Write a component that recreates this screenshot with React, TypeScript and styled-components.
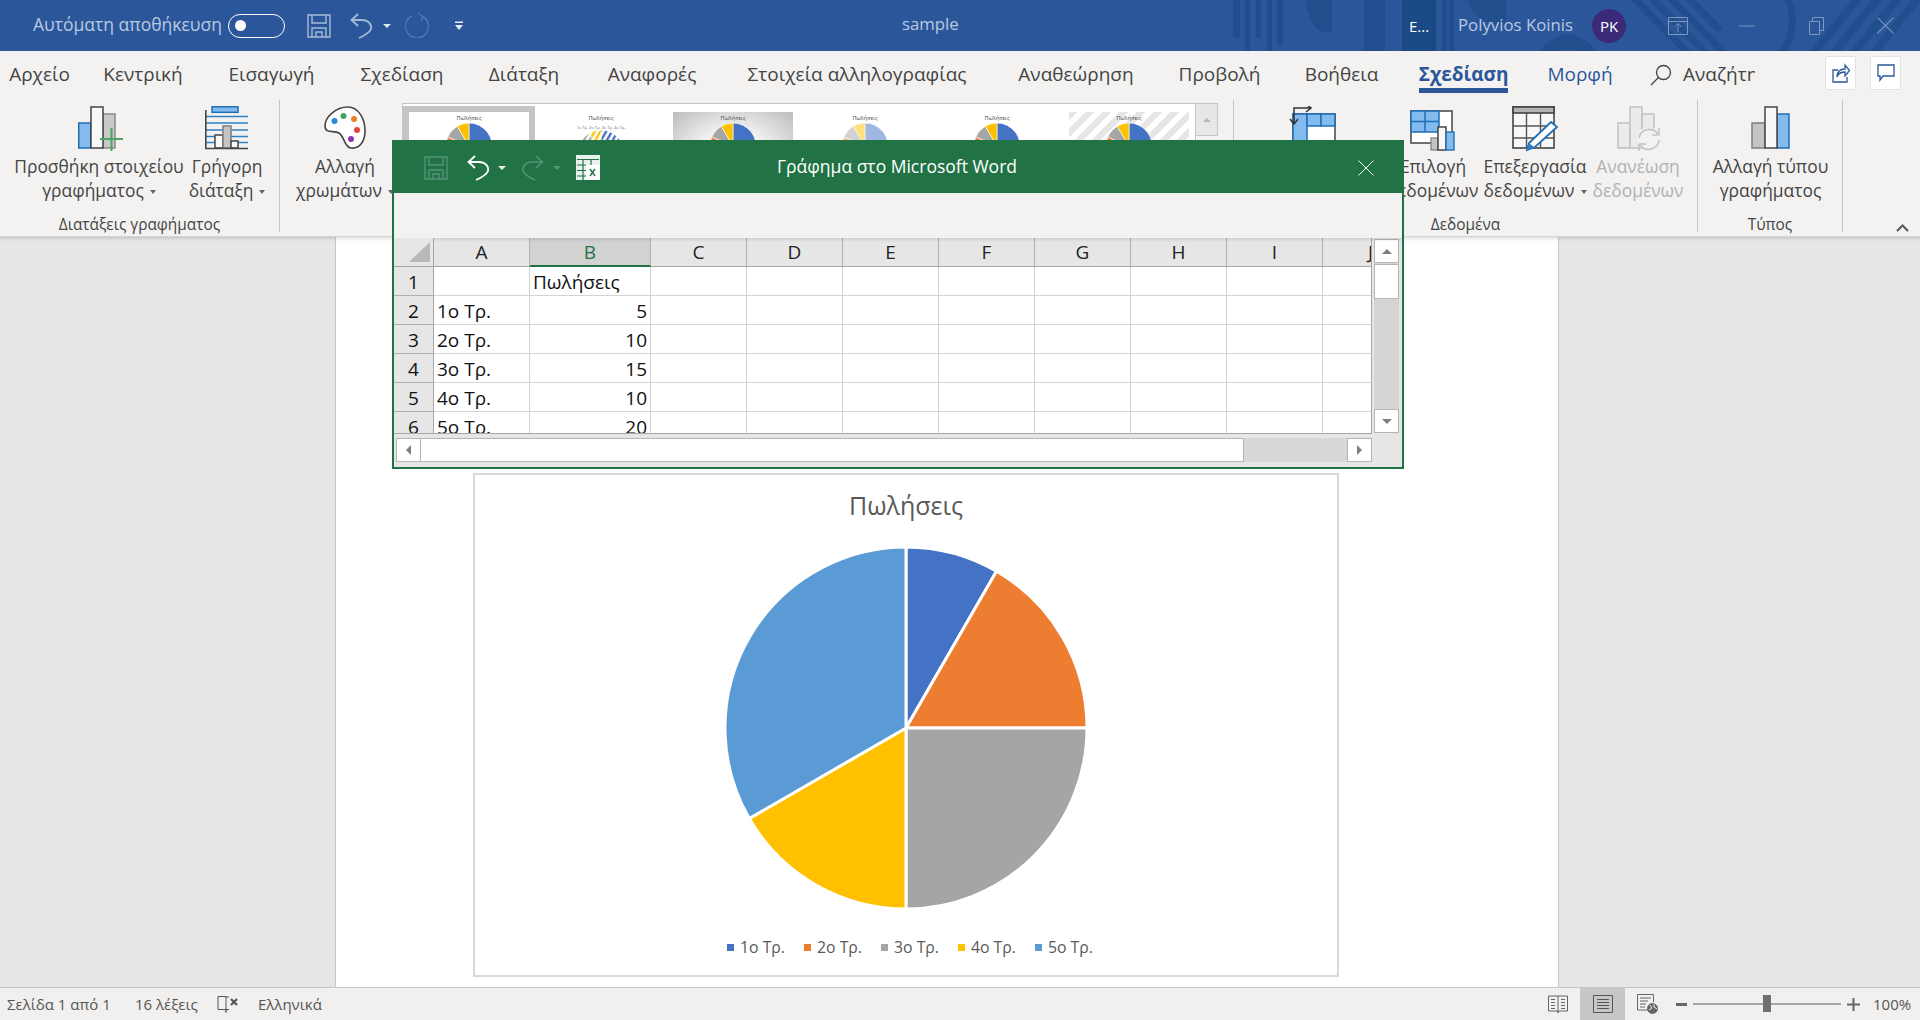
import styled, { createGlobalStyle } from 'styled-components';
import { FC, ReactNode } from 'react';

const FONT = `"Open Sans", "Noto Sans", sans-serif`;
const TEXT = '#444444';
const WORD_BLUE = '#2b579a';
const EXCEL_GREEN = '#217346';
const PIE_COLORS = ['#4472c4', '#ed7d31', '#a5a5a5', '#ffc000', '#5b9bd5'];
const PIE_VALUES = [5, 10, 15, 10, 20];
const THUMB_COLORS = ['#4472c4', '#ed7d31', '#a5a5a5', '#ffc000'];
const THUMB_VALUES = [8.2, 3.2, 1.4, 1.2];
const LABELS = ['1ο Τρ.', '2ο Τρ.', '3ο Τρ.', '4ο Τρ.', '5ο Τρ.'];

const GlobalStyle = createGlobalStyle`
  html, body {
    margin: 0;
    height: 100%;
    overflow: hidden;
    background: #e6e6e6;
    font-family: ${FONT};
  }
  * { box-sizing: border-box; }
`;

const Shell = styled.div`
  position: relative;
  width: 1920px;
  height: 1020px;
  display: flex;
  flex-direction: column;
  overflow: hidden;
`;

/* title bar */
const TitleBar = styled.header`
  position: relative;
  height: 51px;
  flex: none;
  display: flex;
  align-items: center;
  background: ${WORD_BLUE};
  color: #b9c9e0;
  font-size: 16.8px;
`;

const TitlePattern = styled.svg`
  position: absolute;
  right: 0;
  top: 0;
`;

const TitleLeft = styled.div`
  position: relative;
  width: 902px;
  flex: none;
  display: flex;
  align-items: center;
  padding-left: 33px;
`;

const AutoSaveLabel = styled.span`
  width: 190px;
  font-size: 17.5px;
  line-height: 24px;
  margin-top: -3px;
  white-space: nowrap;
`;

const Toggle = styled.span`
  width: 57px;
  height: 24px;
  margin-left: 5px;
  border: 1.5px solid #fff;
  border-radius: 12px;
  display: flex;
  align-items: center;
  padding-left: 6px;

  &::before {
    content: '';
    width: 11px;
    height: 11px;
    border-radius: 50%;
    background: #fff;
  }
`;

const Slot = styled.span<{ $ml: number }>`
  display: flex;
  align-items: center;
  margin-left: ${({ $ml }) => $ml}px;
`;

const Caret = styled.span<{ $color: string }>`
  width: 0;
  height: 0;
  border-left: 4px solid transparent;
  border-right: 4px solid transparent;
  border-top: 4px solid ${({ $color }) => $color};
`;

const DocName = styled.span`
  position: relative;
  width: 57px;
  line-height: 24px;
  margin-top: -3px;
  white-space: nowrap;
`;

const TitleRight = styled.div`
  position: relative;
  margin-left: auto;
  display: flex;
  align-items: center;
  height: 100%;
`;

const DocTab = styled.span`
  width: 34px;
  height: 100%;
  background: #1a4a86;
  color: #fff;
  font-size: 15px;
  display: flex;
  align-items: center;
  justify-content: center;
`;

const UserName = styled.span`
  margin-left: 22px;
  width: 134px;
  line-height: 24px;
  margin-top: -1px;
  white-space: nowrap;
`;

const Avatar = styled.span`
  width: 34px;
  height: 34px;
  border-radius: 50%;
  background: #3c2a79;
  color: #fff;
  font-size: 15px;
  display: flex;
  align-items: center;
  justify-content: center;
`;

const WindowControls = styled.div`
  margin-left: 17px;
  display: flex;
`;

const WindowButton = styled.span`
  width: 69.25px;
  display: flex;
  justify-content: center;
  align-items: center;
`;

/* tabs */
const TabRow = styled.nav`
  height: 49px;
  flex: none;
  display: flex;
  background: #f3f2f1;
  font-size: 19px;
  color: ${TEXT};
`;

const Tab = styled.div<{ $w: number; $accent?: boolean; $active?: boolean }>`
  width: ${({ $w }) => $w}px;
  flex: none;
  display: flex;
  justify-content: center;
  white-space: nowrap;
  color: ${({ $accent }) => ($accent ? WORD_BLUE : 'inherit')};
  font-weight: ${({ $active }) => ($active ? 700 : 400)};
`;

const TabLabel = styled.span<{ $active?: boolean }>`
  height: 42px;
  padding-top: 10px;
  line-height: 26px;
  border-bottom: 5px solid ${({ $active }) => ($active ? WORD_BLUE : 'transparent')};
`;

const SearchBox = styled.div`
  display: flex;
  align-items: flex-start;
  padding: 13px 0 0 11px;
`;

const SearchText = styled.span`
  width: 72px;
  margin-left: 11px;
  overflow: hidden;
  white-space: nowrap;
  line-height: 26px;
  margin-top: -3px;
`;

const TabActions = styled.div`
  margin-left: auto;
  padding: 5px 19px 0 0;
  display: flex;
  gap: 14px;
`;

const ActionButton = styled.span`
  width: 31px;
  height: 34px;
  background: #fff;
  border: 1px solid #e4e3e2;
  border-radius: 2px;
  display: flex;
  align-items: center;
  justify-content: center;
`;

/* ribbon */
const Ribbon = styled.section`
  height: 137px;
  flex: none;
  display: flex;
  background: #f3f2f1;
  border-bottom: 1px solid #d4d3d2;
  box-shadow: 0 2px 3px rgba(0, 0, 0, 0.12);
  position: relative;
  z-index: 1;
`;

const Group = styled.div<{ $w: number }>`
  width: ${({ $w }) => $w}px;
  height: 132px;
  flex: none;
  display: flex;
  flex-direction: column;
  border-right: 1px solid #c8c6c4;
`;

const GroupBody = styled.div`
  height: 116px;
  display: flex;
  align-items: flex-start;
`;

const GroupLabel = styled.div`
  height: 16px;
  line-height: 20px;
  margin-top: -1px;
  text-align: center;
  font-size: 15.4px;
  color: ${TEXT};
  white-space: nowrap;
`;

const RibbonButton = styled.div<{ $w: number; $ml?: number; $off?: boolean }>`
  width: ${({ $w }) => $w}px;
  margin-left: ${({ $ml }) => $ml ?? 0}px;
  flex: none;
  padding-top: 6px;
  display: flex;
  flex-direction: column;
  align-items: center;
  font-size: 17.4px;
  line-height: 24px;
  white-space: nowrap;
  color: ${({ $off }) => ($off ? '#b1b1b1' : TEXT)};
`;

const RibbonIcon = styled.div<{ $shift?: number }>`
  height: 44px;
  margin-bottom: 4px;
  margin-left: ${({ $shift }) => ($shift ?? 0) * 2}px;
`;

const LabelCaret = styled(Caret)`
  display: inline-block;
  vertical-align: middle;
  margin-left: 6px;
  border-left-width: 3px;
  border-right-width: 3px;
`;

const CollapseButton = styled.div`
  flex: 1;
  display: flex;
  justify-content: flex-end;
  align-items: flex-end;
  padding: 0 11px 0 0;
  height: 132px;
`;

const Gallery = styled.div`
  margin-top: 3px;
  width: 816px;
  height: 113px;
  display: flex;
`;

const GalleryItems = styled.div`
  width: 794px;
  background: #fff;
  border: 1px solid #c8c6c4;
  padding-top: 2px;
  display: flex;
  overflow: hidden;
`;

const Thumb = styled.div<{ $selected?: boolean; $bg: string }>`
  width: 132px;
  height: 108px;
  flex: none;
  border: 6px solid ${({ $selected }) => ($selected ? '#c4c4c4' : 'transparent')};
  background: ${({ $bg }) => $bg};
  background-clip: padding-box;
`;

const GalleryScroll = styled.div`
  width: 22px;
  display: flex;
  flex-direction: column;
`;

const GalleryArrow = styled.div`
  height: 33px;
  background: #e8e7e6;
  border: 1px solid #c8c6c4;
  border-left: none;
  display: flex;
  align-items: center;
  justify-content: center;
`;

const ArrowUp = styled.span<{ $color: string; $size: number }>`
  width: 0;
  height: 0;
  border-left: ${({ $size }) => $size}px solid transparent;
  border-right: ${({ $size }) => $size}px solid transparent;
  border-bottom: ${({ $size }) => $size}px solid ${({ $color }) => $color};
`;

const ArrowDown = styled.span<{ $color: string; $size: number }>`
  width: 0;
  height: 0;
  border-left: ${({ $size }) => $size}px solid transparent;
  border-right: ${({ $size }) => $size}px solid transparent;
  border-top: ${({ $size }) => $size}px solid ${({ $color }) => $color};
`;

const ArrowLeft = styled.span<{ $color: string; $size: number }>`
  width: 0;
  height: 0;
  border-top: ${({ $size }) => $size}px solid transparent;
  border-bottom: ${({ $size }) => $size}px solid transparent;
  border-right: ${({ $size }) => $size}px solid ${({ $color }) => $color};
`;

const ArrowRight = styled.span<{ $color: string; $size: number }>`
  width: 0;
  height: 0;
  border-top: ${({ $size }) => $size}px solid transparent;
  border-bottom: ${({ $size }) => $size}px solid transparent;
  border-left: ${({ $size }) => $size}px solid ${({ $color }) => $color};
`;

/* document */
const Workspace = styled.main`
  flex: 1;
  min-height: 0;
  background: #e6e6e6;
  overflow: hidden;
`;

const Page = styled.div`
  width: 1224px;
  height: 100%;
  margin-left: 335px;
  background: #fff;
  border-left: 1px solid #c6c6c6;
  border-right: 1px solid #c6c6c6;
  padding: 236px 0 0 137px;
`;

const ChartBox = styled.div`
  width: 866px;
  height: 504px;
  border: 2px solid #d9d9d9;
  background: #fff;
  display: flex;
  flex-direction: column;
  align-items: center;
  color: #595959;
`;

const ChartTitle = styled.div`
  margin-top: 15px;
  font-size: 25px;
  line-height: 30px;
`;

const PieChart = styled.svg`
  display: block;
  margin-top: 25px;
`;

const Legend = styled.div`
  margin: 26px 0 0 8px;
  display: flex;
  gap: 19px;
  font-size: 15.8px;
  line-height: 20px;
`;

const LegendItem = styled.span`
  display: flex;
  align-items: center;
  gap: 6px;
  white-space: nowrap;
`;

const LegendSwatch = styled.i<{ $color: string }>`
  width: 7px;
  height: 7px;
  background: ${({ $color }) => $color};
`;

/* status bar */
const StatusBar = styled.footer`
  height: 33px;
  flex: none;
  display: flex;
  align-items: center;
  background: #f1f0ef;
  border-top: 1px solid #c8c6c4;
  font-size: 15px;
  color: #555;
  padding-left: 7px;
`;

const StatusText = styled.span<{ $w: number }>`
  width: ${({ $w }) => $w}px;
  flex: none;
  white-space: nowrap;
`;

const StatusIcon = styled.span`
  width: 41px;
  flex: none;
  display: flex;
`;

const StatusRight = styled.div`
  margin-left: auto;
  height: 100%;
  display: flex;
  align-items: center;
`;

const ViewButton = styled.span<{ $active?: boolean }>`
  width: 45px;
  height: 100%;
  display: flex;
  align-items: center;
  justify-content: center;
  background: ${({ $active }) => ($active ? '#c6c6c6' : 'transparent')};
`;

const ZoomSign = styled.span`
  display: flex;
  margin-left: 6px;
`;

const ZoomTrack = styled.div`
  position: relative;
  width: 148px;
  height: 2px;
  margin-left: 6px;
  background: #a6a6a6;
`;

const ZoomThumb = styled.span`
  position: absolute;
  left: 70px;
  top: -8px;
  width: 8px;
  height: 17px;
  background: #6f6f6f;
`;

const ZoomValue = styled.span`
  margin: 0 8px 0 13px;
  width: 39px;
  white-space: nowrap;
`;

/* chart data dialog */
const Dialog = styled.section`
  position: absolute;
  left: 392px;
  top: 140px;
  width: 1012px;
  height: 329px;
  z-index: 2;
  display: flex;
  flex-direction: column;
  border: 2px solid ${EXCEL_GREEN};
  background: #e6e6e6;
`;

const DialogTitle = styled.div`
  height: 51px;
  flex: none;
  display: flex;
  align-items: center;
  background: ${EXCEL_GREEN};
  color: #fff;
  font-size: 17.5px;
  padding-left: 30px;
`;

const DialogCaption = styled.span`
  margin-left: 177px;
  line-height: 24px;
  margin-top: -3px;
  white-space: nowrap;
`;

const DialogClose = styled.span`
  margin-left: auto;
  margin-right: 28px;
  display: flex;
`;

const FormulaBar = styled.div`
  height: 45px;
  flex: none;
  background: #f3f2f1;
  box-shadow: 0 2px 3px rgba(0, 0, 0, 0.1);
  position: relative;
`;

const SheetArea = styled.div`
  height: 196px;
  flex: none;
  display: flex;
`;

const Sheet = styled.div`
  width: 978px;
  height: 196px;
  flex: none;
  overflow: hidden;
  background: #fff;
  border-right: 1px solid #a6a6a6;
  border-bottom: 1px solid #a6a6a6;
  display: grid;
  grid-template-columns: 40px 96px 121px repeat(8, 96px);
  grid-auto-rows: 29px;
  font-size: 19px;
  color: #111;
`;

const Corner = styled.div`
  position: relative;
  background: #e6e6e6;
  border-right: 1px solid #a6a6a6;
  border-bottom: 1px solid #a6a6a6;

  &::after {
    content: '';
    position: absolute;
    right: 3px;
    bottom: 4px;
    width: 21px;
    height: 20px;
    background: #b9b9b9;
    clip-path: polygon(100% 0, 100% 100%, 0 100%);
  }
`;

const ColumnHead = styled.div<{ $selected?: boolean }>`
  background: ${({ $selected }) => ($selected ? '#d2d2d2' : '#e6e6e6')};
  color: ${({ $selected }) => ($selected ? EXCEL_GREEN : '#222')};
  border-right: 1px solid #b0b0b0;
  border-bottom: ${({ $selected }) => ($selected ? `2px solid ${EXCEL_GREEN}` : '1px solid #a6a6a6')};
  text-align: center;
  line-height: 29px;
  overflow: hidden;
`;

const RowHead = styled.div`
  background: #e6e6e6;
  border-right: 1px solid #a6a6a6;
  border-bottom: 1px solid #b0b0b0;
  text-align: center;
  line-height: 30px;
`;

const Cell = styled.div<{ $numeric?: boolean }>`
  border-right: 1px solid #d4d4d4;
  border-bottom: 1px solid #d4d4d4;
  padding: 0 3px;
  text-align: ${({ $numeric }) => ($numeric ? 'right' : 'left')};
  line-height: 30px;
  white-space: nowrap;
`;

const VerticalScroll = styled.div`
  margin: 1px 0 0 2px;
  width: 25px;
  height: 194px;
  flex: none;
  background: #d4d4d4;
  display: flex;
  flex-direction: column;
`;

const ScrollButton = styled.div`
  width: 25px;
  height: 24px;
  flex: none;
  background: #fff;
  border: 1px solid #b5b5b5;
  display: flex;
  align-items: center;
  justify-content: center;
`;

const VerticalThumb = styled.div`
  height: 35px;
  margin-top: 1px;
  background: #fff;
  border: 1px solid #b5b5b5;
`;

const ScrollGap = styled.div`
  flex: 1;
`;

const HorizontalScroll = styled.div`
  margin: 4px 0 0 2px;
  width: 976px;
  height: 24px;
  display: flex;
`;

const HorizontalThumb = styled.div`
  width: 823px;
  background: #fff;
  border: 1px solid #b5b5b5;
  border-left: none;
`;

const HorizontalTrack = styled.div`
  flex: 1;
  background: #d8d8d8;
`;

/* pie geometry */
const pieSlices = (cx: number, cy: number, r: number, values: number[]) => {
  const total = values.reduce((sum, v) => sum + v, 0);
  let angle = 0;
  return values.map((value) => {
    const start = angle;
    angle += (value / total) * Math.PI * 2;
    const x0 = cx + r * Math.sin(start);
    const y0 = cy - r * Math.cos(start);
    const x1 = cx + r * Math.sin(angle);
    const y1 = cy - r * Math.cos(angle);
    const large = angle - start > Math.PI ? 1 : 0;
    return `M${cx} ${cy}L${x0.toFixed(2)} ${y0.toFixed(2)}A${r} ${r} 0 ${large} 1 ${x1.toFixed(2)} ${y1.toFixed(2)}Z`;
  });
};

/* icons */
const SaveIcon: FC<{ color: string }> = ({ color }) => (
  <svg width="24" height="24" viewBox="0 0 24 24" fill="none" stroke={color} strokeWidth="1.4">
    <path d="M1 1h22v22H1z" />
    <path d="M5 1v8h14V1M5 23v-9h14v9M9 23v-5h6v5" />
  </svg>
);

const UndoIcon: FC<{ color: string }> = ({ color }) => (
  <svg width="23" height="26" viewBox="0 0 23 26" fill="none" stroke={color} strokeWidth="1.8">
    <path d="M8 1L1.5 7L8 13" />
    <path d="M1.5 7H12C18 7 22 11 21 16C20 19 14 23 9 25" />
  </svg>
);

const RedoIcon: FC<{ color: string }> = ({ color }) => (
  <svg width="23" height="26" viewBox="0 0 23 26" fill="none" stroke={color} strokeWidth="1.5">
    <path d="M15 1L21.5 7L15 13" />
    <path d="M21.5 7H11C5 7 1 11 2 16C3 19 9 23 14 25" />
  </svg>
);

const RepeatIcon: FC<{ color: string }> = ({ color }) => (
  <svg width="26" height="25" viewBox="0 0 26 25" fill="none" stroke={color} strokeWidth="1.4">
    <path d="M8 3A11.5 11.5 0 1 0 18 3" />
    <path d="M18 3L14 0M18 3V8" />
  </svg>
);

const MoreIcon = () => (
  <svg width="10" height="12" viewBox="0 0 10 12" fill="#e4ebf5">
    <path d="M1 1.5h8V3H1zM1 5h8L5 10z" />
  </svg>
);

const ExcelSheetIcon = () => (
  <svg width="24" height="25" viewBox="0 0 24 25" fill="none">
    <path d="M0 0h24v25H0z" fill="#e8f1ec" />
    <path d="M1 4.5h22M1 10h9M1 15.5h9M1 21h9M7 5v20M15 5v5" stroke={EXCEL_GREEN} strokeWidth="1.2" />
    <path d="M10 10h14v15H10z" fill="#fff" />
    <path d="M14 14l5 7M19 14l-5 7" stroke={EXCEL_GREEN} strokeWidth="1.4" />
  </svg>
);

const Bar: FC<{ x: number; y: number; w: number; h: number; fill: string; stroke: string }> = (p) => (
  <rect x={p.x} y={p.y} width={p.w} height={p.h} fill={p.fill} stroke={p.stroke} strokeWidth="1.5" />
);

const AddElementIcon = () => (
  <svg width="46" height="46" viewBox="0 0 46 46">
    <Bar x={0.75} y={17} w={12} h={25} fill="#83bbee" stroke="#1f6fb5" />
    <Bar x={25} y={8} w={12} h={34} fill="#c8c8c8" stroke="#8a8a8a" />
    <Bar x={13} y={1} w={12} h={41} fill="#f8f8f8" stroke="#444" />
    <path d="M22 33h23M33.5 22v23" stroke="#4aa564" strokeWidth="2" />
  </svg>
);

const QuickLayoutIcon = () => (
  <svg width="44" height="44" viewBox="0 0 44 44" fill="none">
    <rect x="7" y="0.8" width="26" height="5.5" fill="#83bbee" stroke="#1f6fb5" strokeWidth="1.5" />
    <path d="M1 10.5h42M1 17h42M1 24h42M1 30.5h42M1 36.5h42" stroke="#2f81c4" strokeWidth="1.4" />
    <rect x="10" y="29" width="8" height="13" fill="#f8f8f8" stroke="#444" strokeWidth="1.5" />
    <rect x="18" y="20" width="8" height="22" fill="#c4c4c4" stroke="#7d7d7d" strokeWidth="1.5" />
    <rect x="26" y="35" width="7" height="7" fill="#f8f8f8" stroke="#444" strokeWidth="1.5" />
    <path d="M0.8 4v38.5H43" stroke="#444" strokeWidth="1.6" />
  </svg>
);

const PaletteIcon = () => (
  <svg width="42" height="44" viewBox="0 0 42 44">
    <path
      d="M24 1C34 1 41 12 41 25C41 36 35 43 27 42C20 41 21 31 15 27C10 24 1 28 1 20C1 11 12 1 24 1Z"
      fill="#fff"
      stroke="#444"
      strokeWidth="1.6"
    />
    <circle cx="10.5" cy="15" r="3" fill="#2d88cf" />
    <circle cx="19.5" cy="10" r="3" fill="#3ea45a" />
    <circle cx="30" cy="13" r="3" fill="#e9801f" />
    <circle cx="33" cy="24" r="3" fill="#e84141" />
    <circle cx="27" cy="33" r="3" fill="#8a35ad" />
  </svg>
);

const SwitchRowIcon = () => (
  <svg width="48" height="46" viewBox="0 0 48 46" fill="none">
    <rect x="5" y="8" width="42" height="36" fill="#fff" stroke="#444" strokeWidth="1.5" />
    <rect x="5" y="8" width="14" height="36" fill="#83bbee" stroke="#1f6fb5" strokeWidth="1.5" />
    <rect x="19" y="8" width="14" height="12" fill="#83bbee" stroke="#1f6fb5" strokeWidth="1.5" />
    <rect x="33" y="8" width="14" height="12" fill="#83bbee" stroke="#1f6fb5" strokeWidth="1.5" />
    <path d="M6 17V2H22M18 -2L23 2L18 6M2 13L6 18L10 13" stroke="#333" strokeWidth="1.5" />
  </svg>
);

const SelectDataIcon = () => (
  <svg width="46" height="46" viewBox="0 0 46 46" fill="none" style={{ marginTop: 4 }}>
    <rect x="1" y="1" width="41" height="32" fill="#fff" stroke="#444" strokeWidth="1.5" />
    <rect x="1" y="1" width="28" height="21" fill="#83bbee" stroke="#1f6fb5" strokeWidth="1.5" />
    <path d="M15 1v21M1 11.5h28" stroke="#1f6fb5" strokeWidth="1.5" />
    <rect x="21" y="28" width="7" height="12" fill="#c4c4c4" stroke="#7d7d7d" strokeWidth="1.2" />
    <rect x="28" y="17" width="8" height="23" fill="#f8f8f8" stroke="#444" strokeWidth="1.5" />
    <rect x="36" y="22" width="8" height="18" fill="#83bbee" stroke="#1f6fb5" strokeWidth="1.4" />
  </svg>
);

const EditDataIcon = () => (
  <svg width="48" height="46" viewBox="0 0 48 46" fill="none">
    <rect x="1" y="1" width="41" height="41" fill="#f8f8f8" stroke="#444" strokeWidth="1.6" />
    <rect x="1" y="1" width="41" height="6" fill="#b3b3b3" stroke="#444" strokeWidth="1.6" />
    <path d="M1 20h41M1 32h41M14.5 7v35M28.5 7v35" stroke="#555" strokeWidth="1.4" />
    <path d="M39 16L45 21L23 41L15 44L17 37Z" fill="#fff" stroke="#1f6fb5" strokeWidth="1.8" />
    <path d="M15 44L17 37L22 41Z" fill="#2f81c4" />
  </svg>
);

const RefreshIcon = () => (
  <svg width="46" height="46" viewBox="0 0 46 46" fill="none" stroke="#c4c4c4" strokeWidth="1.6">
    <rect x="1" y="17" width="12" height="25" fill="#ebebeb" />
    <rect x="13" y="1" width="12" height="41" fill="#ebebeb" />
    <rect x="25" y="8" width="12" height="34" fill="#ebebeb" />
    <circle cx="32" cy="33" r="12" fill="#f3f2f1" stroke="none" />
    <path d="M22 32A10.5 10.5 0 0 1 41 28M42 34A10.5 10.5 0 0 1 23 39" />
    <path d="M42 22V29H35M22 45V38H29" />
  </svg>
);

const ChangeTypeIcon = () => (
  <svg width="40" height="44" viewBox="0 0 40 44">
    <Bar x={1} y={17} w={13} h={25} fill="#c4c4c4" stroke="#7d7d7d" />
    <Bar x={26} y={8} w={12} h={34} fill="#83bbee" stroke="#1f6fb5" />
    <Bar x={14} y={1} w={12} h={41} fill="#f8f8f8" stroke="#444" />
  </svg>
);

const SearchIcon = () => (
  <svg width="22" height="22" viewBox="0 0 22 22" fill="none" stroke={TEXT} strokeWidth="1.3">
    <circle cx="13.5" cy="8.5" r="7" />
    <path d="M8.5 13.5L1 21" />
  </svg>
);

const ShareIcon = () => (
  <svg width="18" height="20" viewBox="0 0 18 20" fill="none" stroke={WORD_BLUE} strokeWidth="1.3">
    <path d="M6 7H1v12h14v-5" />
    <path d="M5 14C5 9 8 6 13 6V2l4.5 5.5L13 13V9C9 9 6 11 5 14Z" />
  </svg>
);

const CommentIcon = () => (
  <svg width="18" height="18" viewBox="0 0 18 18" fill="none" stroke={WORD_BLUE} strokeWidth="1.3">
    <path d="M1 1h16v11H6l-3 4v-4H1z" />
  </svg>
);

const CloseGlyph: FC<{ color: string; size: number }> = ({ color, size }) => (
  <svg width={size} height={size} viewBox="0 0 16 16" fill="none" stroke={color} strokeWidth="1">
    <path d="M0.5 0.5L15.5 15.5M15.5 0.5L0.5 15.5" />
  </svg>
);

const RibbonDisplayIcon = () => (
  <svg width="20" height="18" viewBox="0 0 20 18" fill="none" stroke="#7d97bf" strokeWidth="1">
    <path d="M0.5 0.5h19v17h-19zM0.5 4.5h19M10 15V7M6.5 10L10 6.5L13.5 10" />
  </svg>
);

const MinimizeIcon = () => (
  <svg width="16" height="2" viewBox="0 0 16 2" stroke="#7d97bf">
    <path d="M0 1h16" />
  </svg>
);

const RestoreIcon = () => (
  <svg width="15" height="18" viewBox="0 0 15 18" fill="none" stroke="#7d97bf">
    <path d="M0.5 4.5h10v13h-10zM3.5 4.5v-4h11v13h-4" />
  </svg>
);

const ProofingIcon = () => (
  <svg width="22" height="18" viewBox="0 0 22 18" fill="none" stroke="#555">
    <path d="M9 1.5H1v13h8v3M9 1.5v16M9 2h3M12 14.5H9" />
    <path d="M14 4l6 6M20 4l-6 6" strokeWidth="2.2" />
  </svg>
);

const ReadModeIcon = () => (
  <svg width="20" height="18" viewBox="0 0 20 18" fill="none" stroke="#666">
    <path d="M0.5 1h19v15H10.5v1.5h-1V16H0.5zM10 1v15M3 4.5h4M3 7.5h4M3 10.5h4M3 13.5h4M13 4.5h4M13 7.5h4M13 10.5h4M13 13.5h4" />
  </svg>
);

const PrintLayoutIcon = () => (
  <svg width="20" height="18" viewBox="0 0 20 18" fill="none" stroke="#555">
    <path d="M0.5 0.5h19v17h-19zM4 4.5h12M4 7.5h12M4 10.5h12M4 13.5h12" />
  </svg>
);

const WebLayoutIcon = () => (
  <svg width="21" height="20" viewBox="0 0 21 20" fill="none" stroke="#666">
    <path d="M11 16H0.5V0.5h16V8M3 4h11M3 7h8M3 10h6M3 13h5" />
    <circle cx="15.5" cy="14.5" r="5" fill="#666" />
    <path d="M13 11l2 3-3 2M17 10v3l3 2" stroke="#f1f0ef" />
  </svg>
);

const CollapseIcon = () => (
  <svg width="13" height="8" viewBox="0 0 13 8" fill="none" stroke="#555" strokeWidth="2">
    <path d="M1 7L6.5 1.5L12 7" />
  </svg>
);

const TitleArt = () => (
  <TitlePattern width="700" height="51" viewBox="0 0 700 51">
    <g fill="#214f8e">
      <rect x="13" width="7" height="38" />
      <rect x="25" width="5" height="51" />
      <rect x="36" width="5" height="38" />
      <rect x="47" width="5" height="51" />
      <rect x="57" width="6" height="45" />
      <path d="M85 0C88 22 97 34 112 33V0Z" />
      <rect x="144" width="21" height="51" />
      <rect x="222" width="5" height="51" />
      <rect x="229" width="5" height="51" />
      <path d="M248 0C252 16 264 24 286 25V0Z" />
    </g>
    <g fill="none" stroke="#214f8e">
      <circle cx="348" cy="66" r="24" strokeWidth="14" />
      <path d="M412 -4L470 55M430 -4L488 55M448 -4L506 55M466 -4L500 30" strokeWidth="7" />
      <path d="M566 -4C576 14 574 38 560 55" strokeWidth="7" />
      <path d="M592 55L640 -4M612 55L660 -4M632 55L680 -4M652 55L700 -4" strokeWidth="8" />
    </g>
  </TitlePattern>
);

/* ribbon gallery */
const GALLERY_THUMBS = [
  { bg: '#fff', opacity: 1, selected: true, striped: false },
  { bg: '#fff', opacity: 1, selected: false, striped: true },
  { bg: 'radial-gradient(ellipse at center, #fff 30%, #bcbcbc 100%)', opacity: 1, selected: false, striped: false },
  { bg: '#fff', opacity: 0.5, selected: false, striped: false },
  { bg: '#fff', opacity: 1, selected: false, striped: false },
  {
    bg: 'repeating-linear-gradient(135deg, #e6e6e6 0 6px, #fff 6px 12px)',
    opacity: 1,
    selected: false,
    striped: false,
  },
];

const MiniChart: FC<{ opacity: number; striped: boolean; index: number }> = ({ opacity, striped, index }) => (
  <svg width="120" height="96" viewBox="0 0 120 96">
    {striped && (
      <defs>
        {THUMB_COLORS.map((color, i) => (
          <pattern
            key={color}
            id={`hatch${index}-${i}`}
            width="5"
            height="5"
            patternUnits="userSpaceOnUse"
            patternTransform="rotate(30)"
          >
            <rect width="5" height="5" fill="#fff" />
            <rect width="2.4" height="5" fill={color} />
          </pattern>
        ))}
      </defs>
    )}
    <text x="60" y="8" textAnchor="middle" fontSize="5.5" fill="#444" fontFamily={FONT}>
      Πωλήσεις
    </text>
    {striped && (
      <text x="60" y="17" textAnchor="middle" fontSize="4" fill="#666" fontFamily={FONT}>
        1ο Τρ. 2ο Τρ. 3ο Τρ. 4ο Τρ.
      </text>
    )}
    {pieSlices(60, striped ? 41 : 34, 23, THUMB_VALUES).map((d, i) => (
      <path
        key={d}
        d={d}
        fill={striped ? `url(#hatch${index}-${i})` : THUMB_COLORS[i]}
        opacity={opacity}
        stroke="#fff"
        strokeWidth="0.6"
      />
    ))}
  </svg>
);

interface RibbonItemProps {
  w: number;
  ml?: number;
  off?: boolean;
  icon: ReactNode;
  iconShift?: number;
  lines: [string, string];
  caret?: boolean;
}

const RibbonItem: FC<RibbonItemProps> = ({ w, ml, off, icon, iconShift, lines, caret }) => (
  <RibbonButton $w={w} $ml={ml} $off={off}>
    <RibbonIcon $shift={iconShift}>{icon}</RibbonIcon>
    <span>{lines[0]}</span>
    <span>
      {lines[1]}
      {caret && <LabelCaret $color="#666" />}
    </span>
  </RibbonButton>
);

const TABS: { label: string; w: number; accent?: boolean; active?: boolean }[] = [
  { label: 'Αρχείο', w: 79 },
  { label: 'Κεντρική', w: 128 },
  { label: 'Εισαγωγή', w: 129 },
  { label: 'Σχεδίαση', w: 132 },
  { label: 'Διάταξη', w: 112 },
  { label: 'Αναφορές', w: 144 },
  { label: 'Στοιχεία αλληλογραφίας', w: 266 },
  { label: 'Αναθεώρηση', w: 172 },
  { label: 'Προβολή', w: 115 },
  { label: 'Βοήθεια', w: 129 },
  { label: 'Σχεδίαση', w: 115, accent: true, active: true },
  { label: 'Μορφή', w: 118, accent: true },
];

const COLUMNS = ['A', 'B', 'C', 'D', 'E', 'F', 'G', 'H', 'I', 'J'];
const EMPTY_COLUMNS = COLUMNS.slice(2);

const SheetRows: FC = () => (
  <>
    {[null, ...LABELS].map((label, i) => (
      <div key={i} style={{ display: 'contents' }}>
        <RowHead>{i + 1}</RowHead>
        <Cell>{label}</Cell>
        {i === 0 ? <Cell>Πωλήσεις</Cell> : <Cell $numeric>{PIE_VALUES[i - 1]}</Cell>}
        {EMPTY_COLUMNS.map((c) => (
          <Cell key={c} />
        ))}
      </div>
    ))}
  </>
);

const App: FC = () => (
  <Shell>
    <GlobalStyle />

    <TitleBar>
      <TitleArt />
      <TitleLeft>
        <AutoSaveLabel>Αυτόματη αποθήκευση</AutoSaveLabel>
        <Toggle />
        <Slot $ml={22}>
          <SaveIcon color="#a7bbd8" />
        </Slot>
        <Slot $ml={19}>
          <UndoIcon color="#a7bbd8" />
        </Slot>
        <Slot $ml={10}>
          <Caret $color="#dfe7f2" />
        </Slot>
        <Slot $ml={13}>
          <RepeatIcon color="#4f76ae" />
        </Slot>
        <Slot $ml={24}>
          <MoreIcon />
        </Slot>
      </TitleLeft>
      <DocName>sample</DocName>
      <TitleRight>
        <DocTab>E...</DocTab>
        <UserName>Polyvios Koinis</UserName>
        <Avatar>PK</Avatar>
        <WindowControls>
          <WindowButton>
            <RibbonDisplayIcon />
          </WindowButton>
          <WindowButton>
            <MinimizeIcon />
          </WindowButton>
          <WindowButton>
            <RestoreIcon />
          </WindowButton>
          <WindowButton>
            <CloseGlyph color="#7d97bf" size={17} />
          </WindowButton>
        </WindowControls>
      </TitleRight>
    </TitleBar>

    <TabRow>
      {TABS.map((tab, i) => (
        <Tab key={i} $w={tab.w} $accent={tab.accent} $active={tab.active}>
          <TabLabel $active={tab.active}>{tab.label}</TabLabel>
        </Tab>
      ))}
      <SearchBox>
        <SearchIcon />
        <SearchText>Αναζήτηση</SearchText>
      </SearchBox>
      <TabActions>
        <ActionButton>
          <ShareIcon />
        </ActionButton>
        <ActionButton>
          <CommentIcon />
        </ActionButton>
      </TabActions>
    </TabRow>

    <Ribbon>
      <Group $w={280}>
        <GroupBody>
          <RibbonItem
            w={178}
            ml={10}
            icon={<AddElementIcon />}
            iconShift={2}
            lines={['Προσθήκη στοιχείου', 'γραφήματος']}
            caret
          />
          <RibbonItem w={78} icon={<QuickLayoutIcon />} lines={['Γρήγορη', 'διάταξη']} caret />
        </GroupBody>
        <GroupLabel>Διατάξεις γραφήματος</GroupLabel>
      </Group>

      <Group $w={954}>
        <GroupBody>
          <RibbonItem w={114} ml={8} icon={<PaletteIcon />} lines={['Αλλαγή', 'χρωμάτων']} caret />
          <Gallery>
            <GalleryItems>
              {GALLERY_THUMBS.map((thumb, i) => (
                <Thumb key={i} $selected={thumb.selected} $bg={thumb.bg}>
                  <MiniChart opacity={thumb.opacity} striped={thumb.striped} index={i} />
                </Thumb>
              ))}
            </GalleryItems>
            <GalleryScroll>
              <GalleryArrow>
                <ArrowUp $color="#b5b5b5" $size={4} />
              </GalleryArrow>
            </GalleryScroll>
          </Gallery>
        </GroupBody>
      </Group>

      <Group $w={464}>
        <GroupBody>
          <RibbonItem w={100} ml={28} icon={<SwitchRowIcon />} lines={['Εναλλαγή', 'γραμμής/στήλης']} />
          <RibbonItem w={100} ml={21} icon={<SelectDataIcon />} lines={['Επιλογή', 'δεδομένων']} />
          <RibbonItem w={100} ml={2} icon={<EditDataIcon />} iconShift={1} lines={['Επεξεργασία', 'δεδομένων']} caret />
          <RibbonItem w={100} ml={3} off icon={<RefreshIcon />} iconShift={2} lines={['Ανανέωση', 'δεδομένων']} />
        </GroupBody>
        <GroupLabel>Δεδομένα</GroupLabel>
      </Group>

      <Group $w={145}>
        <GroupBody>
          <RibbonItem w={145} icon={<ChangeTypeIcon />} lines={['Αλλαγή τύπου', 'γραφήματος']} />
        </GroupBody>
        <GroupLabel>Τύπος</GroupLabel>
      </Group>

      <CollapseButton>
        <CollapseIcon />
      </CollapseButton>
    </Ribbon>

    <Workspace>
      <Page>
        <ChartBox>
          <ChartTitle>Πωλήσεις</ChartTitle>
          <PieChart width="366" height="366" viewBox="0 0 366 366">
            {pieSlices(183, 183, 181, PIE_VALUES).map((d, i) => (
              <path key={d} d={d} fill={PIE_COLORS[i]} stroke="#fff" strokeWidth="3" />
            ))}
          </PieChart>
          <Legend>
            {LABELS.map((label, i) => (
              <LegendItem key={label}>
                <LegendSwatch $color={PIE_COLORS[i]} />
                {label}
              </LegendItem>
            ))}
          </Legend>
        </ChartBox>
      </Page>
    </Workspace>

    <StatusBar>
      <StatusText $w={128}>Σελίδα 1 από 1</StatusText>
      <StatusText $w={82}>16 λέξεις</StatusText>
      <StatusIcon>
        <ProofingIcon />
      </StatusIcon>
      <StatusText $w={80}>Ελληνικά</StatusText>
      <StatusRight>
        <ViewButton>
          <ReadModeIcon />
        </ViewButton>
        <ViewButton $active>
          <PrintLayoutIcon />
        </ViewButton>
        <ViewButton>
          <WebLayoutIcon />
        </ViewButton>
        <ZoomSign>
          <svg width="11" height="3" viewBox="0 0 11 3" fill="#666">
            <path d="M0 0h11v3H0z" />
          </svg>
        </ZoomSign>
        <ZoomTrack>
          <ZoomThumb />
        </ZoomTrack>
        <ZoomSign>
          <svg width="13" height="13" viewBox="0 0 13 13" fill="#666">
            <path d="M5.5 0h2v5.5H13v2H7.5V13h-2V7.5H0v-2h5.5z" />
          </svg>
        </ZoomSign>
        <ZoomValue>100%</ZoomValue>
      </StatusRight>
    </StatusBar>

    <Dialog>
      <DialogTitle>
        <SaveIcon color="#55937a" />
        <Slot $ml={19}>
          <UndoIcon color="#fff" />
        </Slot>
        <Slot $ml={8}>
          <Caret $color="#dfeee6" />
        </Slot>
        <Slot $ml={15}>
          <RedoIcon color="#55937a" />
        </Slot>
        <Slot $ml={9}>
          <Caret $color="#55937a" />
        </Slot>
        <Slot $ml={15}>
          <ExcelSheetIcon />
        </Slot>
        <DialogCaption>Γράφημα στο Microsoft Word</DialogCaption>
        <DialogClose>
          <CloseGlyph color="#fff" size={16} />
        </DialogClose>
      </DialogTitle>
      <FormulaBar />
      <SheetArea>
        <Sheet>
          <Corner />
          {COLUMNS.map((c) => (
            <ColumnHead key={c} $selected={c === 'B'}>
              {c}
            </ColumnHead>
          ))}
          <SheetRows />
        </Sheet>
        <VerticalScroll>
          <ScrollButton>
            <ArrowUp $color="#7f7f7f" $size={5} />
          </ScrollButton>
          <VerticalThumb />
          <ScrollGap />
          <ScrollButton>
            <ArrowDown $color="#7f7f7f" $size={5} />
          </ScrollButton>
        </VerticalScroll>
      </SheetArea>
      <HorizontalScroll>
        <ScrollButton>
          <ArrowLeft $color="#7f7f7f" $size={5} />
        </ScrollButton>
        <HorizontalThumb />
        <HorizontalTrack />
        <ScrollButton>
          <ArrowRight $color="#7f7f7f" $size={5} />
        </ScrollButton>
      </HorizontalScroll>
    </Dialog>
  </Shell>
);

export default App;
